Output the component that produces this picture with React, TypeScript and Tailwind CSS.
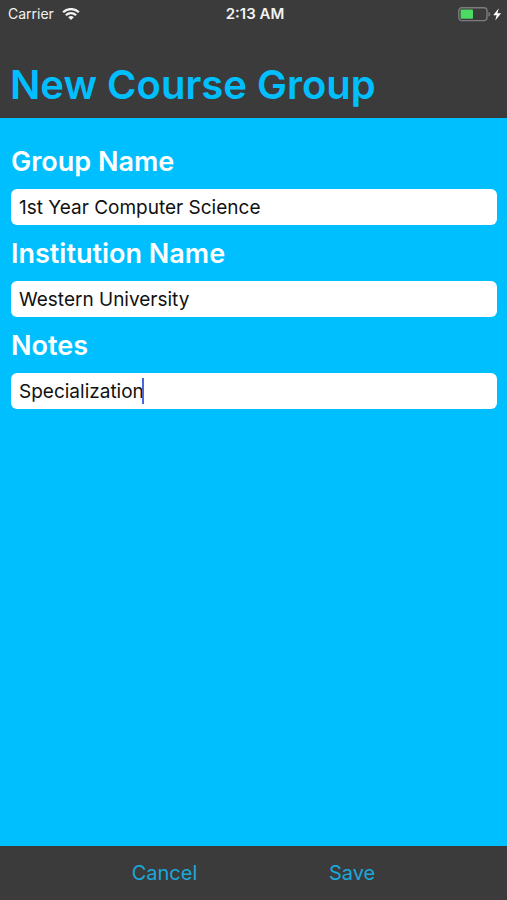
import { useState } from 'react';

interface Field {
  id: string;
  label: string;
  value: string;
}

const initialFields: Field[] = [
  { id: 'group-name', label: 'Group Name', value: '1st Year Computer Science' },
  { id: 'institution-name', label: 'Institution Name', value: 'Western University' },
  { id: 'notes', label: 'Notes', value: 'Specialization' },
];

function WifiIcon() {
  return (
    <svg className="w-[18px] h-3" viewBox="0 0 18 12" fill="none" stroke="currentColor" strokeWidth="2.3" aria-hidden="true">
      <path d="M1.1 4.3a11.3 11.3 0 0 1 15.8 0" />
      <path d="M3.9 7.2a7.3 7.3 0 0 1 10.2 0" />
      <path d="M9 12 6.2 9.3a4 4 0 0 1 5.6 0z" fill="currentColor" stroke="none" />
    </svg>
  );
}

function BatteryIcon() {
  return (
    <svg className="w-[44px] h-[15px]" viewBox="0 0 44 15" aria-hidden="true">
      <rect x="0.8" y="0.8" width="28.2" height="12.8" rx="3" fill="none" stroke="#7c7c7c" strokeWidth="1.4" />
      <path d="M30.4 4.9c1.3.4 1.9 1.2 1.9 2.3s-.6 1.9-1.9 2.3z" fill="#7c7c7c" />
      <rect x="2.6" y="2.6" width="12.4" height="9.2" rx="0.8" fill="#4cd964" />
      <path d="M40.8 1.3 35.2 8.2h3.4l-1.3 5.2 5.8-7.1h-3.7z" fill="#fff" />
    </svg>
  );
}

function StatusBar() {
  return (
    <div className="grid grid-cols-[1fr_auto_1fr] items-center h-7 pl-2 pr-[5px] text-[#f2f2f2]">
      <div className="flex items-center gap-2 text-sm">
        <span>Carrier</span>
        <WifiIcon />
      </div>
      <span className="text-[15px] font-semibold">2:13 AM</span>
      <div className="flex justify-end">
        <BatteryIcon />
      </div>
    </div>
  );
}

export default function App() {
  const [fields, setFields] = useState(initialFields);

  const updateField = (id: string, value: string) => {
    setFields(fields.map((field) => (field.id === id ? { ...field, value } : field)));
  };

  return (
    <form
      className="min-h-screen flex flex-col bg-[#00bfff] font-['Inter',sans-serif]"
      onSubmit={(e) => e.preventDefault()}
    >
      {/* Header */}
      <header className="bg-[#3b3b3b] pb-2">
        <StatusBar />
        <h1 className="px-[10px] pt-8 text-[40px] leading-[50px] font-semibold text-[#00bfff]">
          New Course Group
        </h1>
      </header>

      {/* Fields */}
      <main className="flex-1 pl-[11px] pr-[10px] pt-[15px]">
        {fields.map((field) => (
          <div key={field.id}>
            <label htmlFor={field.id} className="block h-14 pt-2 text-[27px] leading-[42px] font-semibold text-white">
              {field.label}
            </label>
            <div className="relative">
              <input
                id={field.id}
                type="text"
                value={field.value}
                onChange={(e) => updateField(field.id, e.target.value)}
                className="block w-full h-9 px-2 rounded-md bg-white text-[19px] text-[#111111] outline-none caret-[#4169e1]"
              />
              {/* Text cursor of the active field */}
              {field.id === 'notes' && field.value === 'Specialization' && (
                <span className="absolute left-[131px] top-[5px] w-0.5 h-[26px] bg-[#4a68dc] pointer-events-none"></span>
              )}
            </div>
          </div>
        ))}
      </main>

      {/* Actions */}
      <footer className="flex justify-evenly items-center h-[54px] bg-[#3b3b3b] text-xl text-[#1ba8da]">
        <button type="button">Cancel</button>
        <button type="submit">Save</button>
      </footer>
    </form>
  );
}
